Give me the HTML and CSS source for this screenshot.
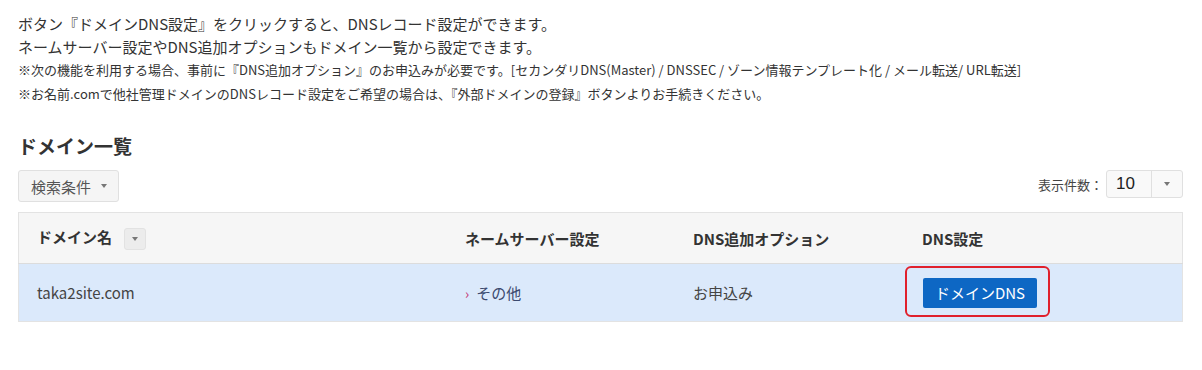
FILE: index.html
```html
<!DOCTYPE html>
<html lang="ja">
<head>
    <meta charset="UTF-8">
    <title>ドメイン一覧</title>
    <link rel="stylesheet" href="styles.css">
</head>
<body>

<div class="page">
    <div class="intro">
        <p class="lead">ボタン『ドメインDNS設定』をクリックすると、DNSレコード設定ができます。<br>ネームサーバー設定やDNS追加オプションもドメイン一覧から設定できます。</p>
        <p class="note">※次の機能を利用する場合、事前に『DNS追加オプション』のお申込みが必要です。[セカンダリDNS(Master) / DNSSEC / ゾーン情報テンプレート化 / メール転送/ URL転送]</p>
        <p class="note">※お名前.comで他社管理ドメインのDNSレコード設定をご希望の場合は、『外部ドメインの登録』ボタンよりお手続きください。</p>
    </div>

    <h2>ドメイン一覧</h2>

    <div class="toolbar">
        <button class="search-btn">検索条件 <span class="caret"></span></button>
        <div class="per-page">
            <span class="per-page-label">表示件数：</span>
            <div class="select">
                <span class="select-value">10</span>
                <span class="select-arrow"><span class="caret"></span></span>
            </div>
        </div>
    </div>

    <table class="domain-table">
        <thead>
            <tr>
                <th class="col-name">ドメイン名 <span class="sort-btn"><span class="caret"></span></span></th>
                <th class="col-ns">ネームサーバー設定</th>
                <th class="col-opt">DNS追加オプション</th>
                <th class="col-dns">DNS設定</th>
            </tr>
        </thead>
        <tbody>
            <tr>
                <td>taka2site.com</td>
                <td><span class="arrow">›</span><span class="ns-link">その他</span></td>
                <td>お申込み</td>
                <td><span class="highlight"><button class="dns-btn">ドメインDNS</button></span></td>
            </tr>
        </tbody>
    </table>
</div>

</body>
</html>
```

FILE: styles.css
```css
body {
    margin: 0;
    padding: 0;
    background-color: #fff;
    color: #333;
    font-family: "Noto Sans CJK JP", "Noto Sans", sans-serif;
}
.page {
    padding: 12px 19px 0 18px;
}
.intro p {
    margin: 0;
}
.lead {
    font-size: 15px;
    line-height: 23px;
}
.note {
    font-size: 13px;
    line-height: 24px;
}
h2 {
    font-size: 19px;
    line-height: 28px;
    font-weight: bold;
    margin: 26px 0 10px;
    color: #333;
}

.toolbar {
    display: flex;
    justify-content: space-between;
    align-items: flex-start;
    margin-bottom: 10px;
}
.search-btn {
    font-family: inherit;
    font-size: 15px;
    color: #555;
    background-color: #f5f5f5;
    border: 1px solid #e0e0e0;
    border-radius: 3px;
    height: 32px;
    width: 101px;
    padding: 0 0 0 1px;
    display: flex;
    align-items: center;
    justify-content: center;
    gap: 10px;
}
.caret {
    display: inline-block;
    width: 0;
    height: 0;
    border-left: 3px solid transparent;
    border-right: 3px solid transparent;
    border-top: 4px solid #777;
}
.per-page {
    display: flex;
    align-items: center;
    height: 28px;
}
.per-page-label {
    font-size: 13px;
    color: #444;
    margin-right: 3px;
}
.select {
    display: flex;
    width: 77px;
    height: 28px;
    border: 1px solid #e0e0e0;
    border-radius: 3px;
    background-color: #f9f9f9;
    box-sizing: border-box;
}
.select-value {
    flex: 1;
    font-family: "Liberation Sans", Arial, sans-serif;
    font-size: 17px;
    line-height: 26px;
    padding-left: 9px;
    color: #222;
}
.select-arrow {
    width: 30px;
    border-left: 1px solid #e0e0e0;
    display: flex;
    align-items: center;
    justify-content: center;
}

.domain-table {
    width: 100%;
    border-collapse: collapse;
    border: 1px solid #e3e3e3;
    font-size: 15px;
}
.domain-table th {
    background-color: #f6f6f6;
    text-align: left;
    font-weight: bold;
    height: 50px;
    padding: 0 18px;
    border-bottom: 1px solid #dcdcdc;
    color: #333;
}
.domain-table td {
    background-color: #dbe9fb;
    height: 57px;
    padding: 0 18px;
    color: #444;
}
.col-name {
    width: 392px;
}
.col-ns {
    width: 192px;
}
.col-opt {
    width: 193px;
}
.sort-btn {
    display: inline-flex;
    align-items: center;
    justify-content: center;
    width: 22px;
    height: 22px;
    margin-left: 9px;
    vertical-align: middle;
    background-color: #ececec;
    border: 1px solid #e2e2e2;
    border-radius: 3px;
    box-sizing: border-box;
}
.arrow {
    color: #c2306e;
    margin-right: 7px;
    font-size: 14px;
}
.ns-link {
    color: #3c4a6e;
}

.highlight {
    position: relative;
    display: inline-block;
    margin-left: 1px;
}
.highlight::after {
    content: "";
    position: absolute;
    top: -12px;
    bottom: -9px;
    left: -18px;
    right: -13px;
    border: 2px solid #e0202c;
    border-radius: 6px;
}
.dns-btn {
    font-family: inherit;
    font-size: 15px;
    color: #fff;
    background-color: #0d67c4;
    border: none;
    border-radius: 2px;
    width: 114px;
    height: 30px;
    padding: 0;
    display: block;
}
```
